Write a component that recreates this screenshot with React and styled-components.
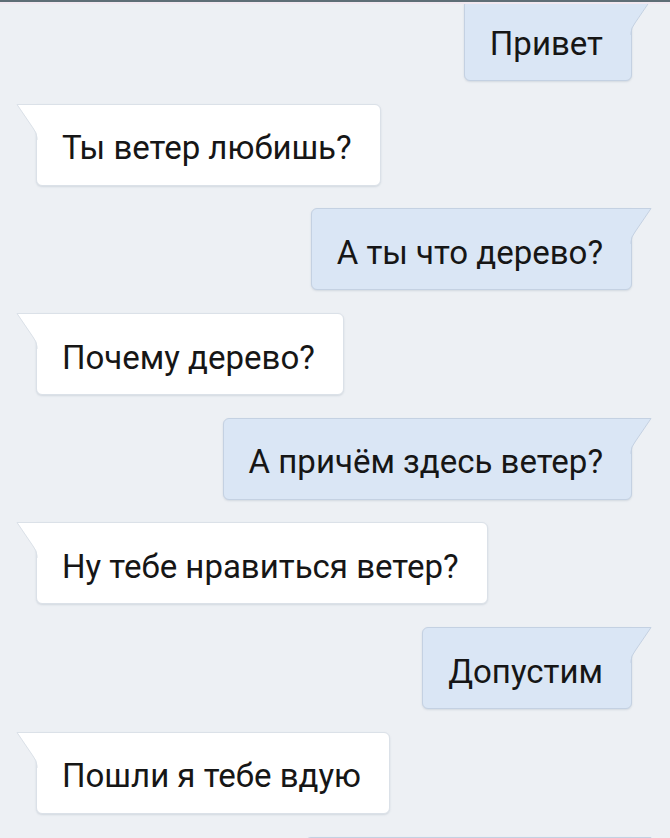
import styled, { createGlobalStyle } from "styled-components";

const GlobalStyle = createGlobalStyle`
  html, body {
    margin: 0;
    padding: 0;
    background: #edf0f4;
  }
  body {
    font-family: Roboto, "Noto Sans", sans-serif;
  }
`;

const Screen = styled.div`
  position: relative;
  width: 670px;
  height: 838px;
  overflow: hidden;
  background: #edf0f4;
`;

const TopEdge = styled.div`
  position: absolute;
  top: 0;
  left: 0;
  right: 0;
  height: 2px;
  background: #5e6e76;
  border-bottom: 2px solid #f1e8f0;
  z-index: 2;
`;

const List = styled.div`
  display: flex;
  flex-direction: column;
  gap: 22.7px;
  margin-top: -1px;
  padding: 0 38px 0 36px;
`;

const Row = styled.div`
  display: flex;
  justify-content: ${(p) => (p.$out ? "flex-end" : "flex-start")};
`;

const Bubble = styled.div`
  position: relative;
  box-sizing: border-box;
  height: 82px;
  display: flex;
  align-items: center;
  padding: 6px 28px 0 25px;
  font-size: 33px;
  color: #161616;
  white-space: nowrap;
  background: ${(p) => (p.$out ? "#dae6f5" : "#ffffff")};
  border: 1px solid ${(p) => (p.$out ? "#c4d1e2" : "#dbe1e8")};
  border-radius: ${(p) => (p.$out ? "6px 0 6px 6px" : "0 6px 6px 6px")};
  box-shadow: 0 1px 2px rgba(90, 110, 135, 0.18);
`;

const Tail = styled.svg`
  position: absolute;
  top: -1px;
  ${(p) => (p.$out ? "right: -21px;" : "left: -21px;")}
  width: 22px;
  height: 36px;
  overflow: visible;
  transform: ${(p) => (p.$out ? "scaleX(-1)" : "none")};
`;

function BubbleTail({ out }) {
  const fill = out ? "#dae6f5" : "#ffffff";
  const stroke = out ? "#c4d1e2" : "#dbe1e8";
  return (
    <Tail $out={out} viewBox="0 0 22 36">
      <path d="M22 0 H1 L17 24 Q21 29 21 34 V36 H22 Z" fill={fill} />
      <path d="M22 0.5 H1 L17 24 Q21 29 21 34 V36" fill="none" stroke={stroke} strokeWidth="1" />
    </Tail>
  );
}

const messages = [
  { out: true, text: "Привет" },
  { out: false, text: "Ты ветер любишь?" },
  { out: true, text: "А ты что дерево?" },
  { out: false, text: "Почему дерево?" },
  { out: true, text: "А причём здесь ветер?" },
  { out: false, text: "Ну тебе нравиться ветер?" },
  { out: true, text: "Допустим" },
  { out: false, text: "Пошли я тебе вдую" },
  { out: true, text: "\u00a0" },
];

export default function App() {
  return (
    <Screen>
      <GlobalStyle />
      <TopEdge />
      <List>
        {messages.map((m, i) => (
          <Row key={i} $out={m.out}>
            <Bubble $out={m.out} style={i === messages.length - 1 ? { width: 327 } : undefined}>
              <BubbleTail out={m.out} />
              {m.text}
            </Bubble>
          </Row>
        ))}
      </List>
    </Screen>
  );
}
